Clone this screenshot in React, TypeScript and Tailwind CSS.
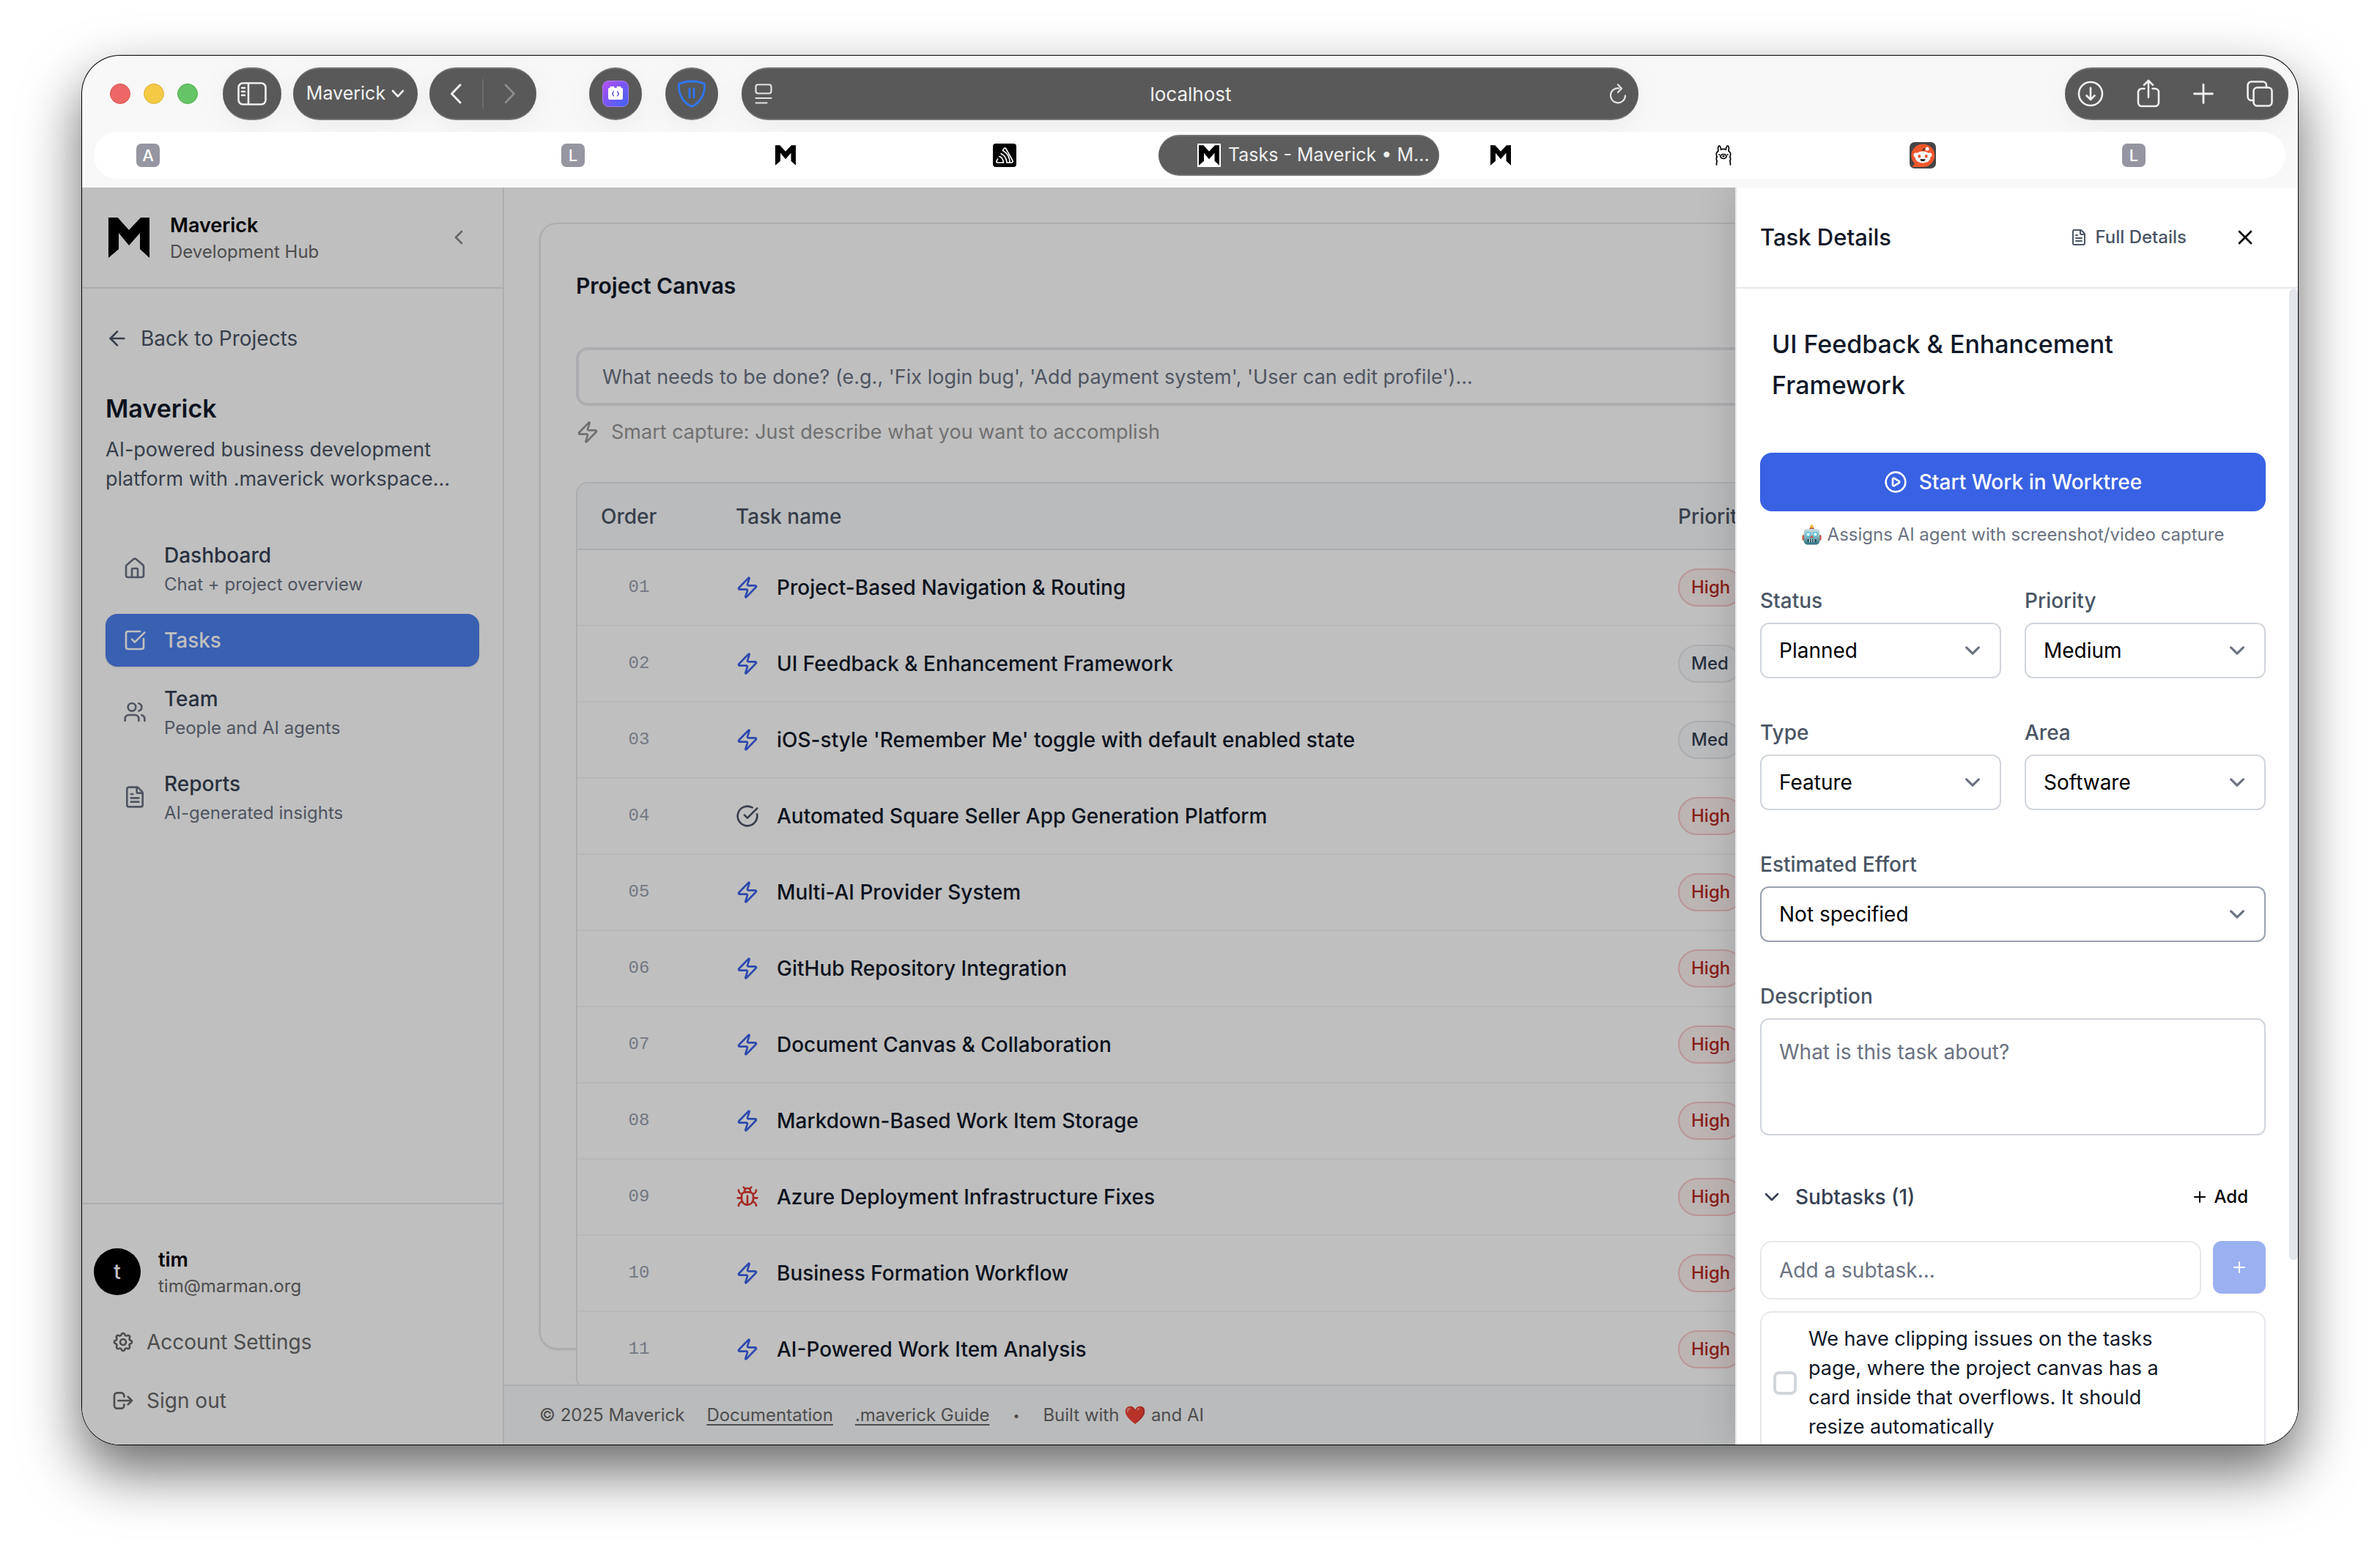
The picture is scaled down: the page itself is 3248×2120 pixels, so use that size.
import type { ComponentType, ReactNode } from "react";
import {
  ArrowLeft,
  Bug,
  ChevronDown,
  ChevronLeft,
  CirclePlay,
  CircleCheckBig,
  FileText,
  House,
  Plus,
  SquareCheckBig,
  Users,
  X,
  Zap,
} from "lucide-react";

type IconType = ComponentType<{ className?: string; strokeWidth?: number }>;

function MarkLogo({ className }: { className?: string }) {
  return (
    <svg viewBox="0 0 56 55" className={className} fill="#000" aria-hidden="true">
      <path d="M0 0H12.6L28 17L44 0H56V55L43 43V21L28 38L14 21V43L0 55Z" />
    </svg>
  );
}

/* ---------- Browser chrome ---------- */

const pill =
  "flex h-[72px] shrink-0 items-center rounded-full border-y-2 border-[#747474] bg-[#595959] text-[#f0f0f0] shadow-[0_8px_40px_rgba(0,0,0,0.05)]";

function SidebarGlyph() {
  return (
    <svg viewBox="0 0 40 32" className="h-8 w-10" fill="none" stroke="currentColor" strokeWidth="2.6" strokeLinecap="round">
      <rect x="1.5" y="1.5" width="37" height="29" rx="6" />
      <path d="M15 2v28M6 8h4M6 13h4M6 18h4" />
    </svg>
  );
}

function BlocksExtension() {
  return (
    <svg viewBox="0 0 36 36" className="size-9">
      <defs>
        <linearGradient id="ext" x1="0" y1="0" x2="1" y2="1">
          <stop offset="0.1" stopColor="#a94ff5" />
          <stop offset="1" stopColor="#3a63f6" />
        </linearGradient>
      </defs>
      <rect x="0.5" y="0.5" width="35" height="35" rx="8" fill="url(#ext)" stroke="#b07af2" />
      <path d="M8 11.5a1.500 1.500 0 0 1 1.500-1.500h1V9a1 1 0 0 1 1-1h4a1 1 0 0 1 1 1v1h3V9a1 1 0 0 1 1-1h4a1 1 0 0 1 1 1v1h1a1.500 1.500 0 0 1 1.500 1.500V24a2 2 0 0 1-2 2H10a2 2 0 0 1-2-2Z" fill="#fff" />
      <path d="M16 15c-1.500 0-1.500.8-1.500 1.700S14 18 13 18c1 0 1.500.4 1.500 1.300S14.500 21 16 21M20 15c1.500 0 1.500.8 1.500 1.700S22 18 23 18c-1 0-1.500.4-1.500 1.300S21.500 21 20 21" fill="none" stroke="#5b4be0" strokeWidth="1.3" />
    </svg>
  );
}

function ShieldExtension() {
  return (
    <svg viewBox="0 0 38 38" className="size-[38px]" fill="none" stroke="#2f76f5" strokeWidth="2.8" strokeLinecap="round" strokeLinejoin="round">
      <path d="M1.5 5.500C12 .8 26 .8 36.500 5.500 37.500 19 31 31 19 36.500 7 31 .5 19 1.500 5.500Z" />
      <path d="M16 12v12M22 12v12" />
    </svg>
  );
}

function ReaderGlyph() {
  return (
    <svg viewBox="0 0 24 28" className="h-7 w-6" fill="none" stroke="#e4e4e4" strokeWidth="2.2" strokeLinecap="round">
      <rect x="1.5" y="1.5" width="21" height="12" rx="3" />
      <path d="M1.5 20h21M1.500 26.500h15" />
    </svg>
  );
}

function ReloadGlyph() {
  return (
    <svg viewBox="0 0 24 28" className="h-7 w-6" fill="none" stroke="#e4e4e4" strokeWidth="2.2" strokeLinecap="round" strokeLinejoin="round">
      <path d="M13.5 6.500A10 10 0 1 0 22 16.500M12 1.500l5 5.300-5 5.200" />
    </svg>
  );
}

const glyph = { fill: "none", stroke: "currentColor", strokeWidth: 2.6, strokeLinecap: "round", strokeLinejoin: "round" } as const;

function Toolbar() {
  return (
    <div className="flex h-[104px] items-center pr-[13px] pl-[38px]">
      <div className="flex gap-[18px]">
        <button aria-label="Close window" className="size-7 rounded-full border border-[#d9534f] bg-[#ec6765]" />
        <button aria-label="Minimise window" className="size-7 rounded-full border border-[#deb23a] bg-[#f4c944]" />
        <button aria-label="Zoom window" className="size-7 rounded-full border border-[#4fb24c] bg-[#65c466]" />
      </div>
      <button aria-label="Show sidebar" className={`${pill} ml-[34px] w-20 justify-center`}>
        <SidebarGlyph />
      </button>
      <button className={`${pill} ml-4 w-[170px] justify-center gap-2 text-[25px]`}>
        Maverick
        <svg viewBox="0 0 18 12" className="h-3 w-[18px]" {...glyph}>
          <path d="M2 2l7 7.5L16 2" />
        </svg>
      </button>
      <div className={`${pill} ml-4 w-[146px]`}>
        <button aria-label="Back" className="flex flex-1 justify-center">
          <svg viewBox="0 0 16 28" className="h-7 w-4" {...glyph} strokeWidth={3}>
            <path d="M14 2L2.500 14L14 26" />
          </svg>
        </button>
        <span className="h-10 w-0.5 bg-[#6b6b6b]" />
        <button aria-label="Forward" className="flex flex-1 justify-center text-[#8c8c8c]">
          <svg viewBox="0 0 16 28" className="h-7 w-4" {...glyph}>
            <path d="M2 2L13.500 14L2 26" />
          </svg>
        </button>
      </div>
      <button aria-label="Blocks extension" className={`${pill} ml-[72px] w-[72px] justify-center`}>
        <BlocksExtension />
      </button>
      <button aria-label="Content blocker" className={`${pill} ml-8 w-[72px] justify-center`}>
        <ShieldExtension />
      </button>
      <div className={`${pill} ml-8 w-[1224px] justify-between pr-4 pl-[18px]`}>
        <button aria-label="Page menu">
          <ReaderGlyph />
        </button>
        <span className="text-[26px]">localhost</span>
        <button aria-label="Reload">
          <ReloadGlyph />
        </button>
      </div>
      <div className={`${pill} ml-auto w-[305px] justify-between pr-[21px] pl-[17px]`}>
        <button aria-label="Downloads">
          <svg viewBox="0 0 36 36" className="size-9" {...glyph}>
            <circle cx="18" cy="18" r="16" />
            <path d="M18 10v16M12.500 20.500L18 26l5.500-5.500" />
          </svg>
        </button>
        <button aria-label="Share">
          <svg viewBox="0 0 32 40" className="h-10 w-8" {...glyph}>
            <path d="M10.500 13H7a5 5 0 0 0-5 5v14a5 5 0 0 0 5 5h18a5 5 0 0 0 5-5V18a5 5 0 0 0-5-5h-3.500M16 25V2M10 8l6-6 6 6" />
          </svg>
        </button>
        <button aria-label="New tab">
          <svg viewBox="0 0 28 28" className="size-7" {...glyph} strokeWidth={2.8}>
            <path d="M14 1.500v25M1.500 14h25" />
          </svg>
        </button>
        <button aria-label="Tab overview">
          <svg viewBox="0 0 36 36" className="size-9" {...glyph}>
            <rect x="9.5" y="9.5" width="25" height="25" rx="5" />
            <path d="M9.500 27H6.500a5 5 0 0 1-5-5V6.500a5 5 0 0 1 5-5H22a5 5 0 0 1 5 5v3" />
          </svg>
        </button>
      </div>
    </div>
  );
}

function LetterBadge({ letter }: { letter: string }) {
  return (
    <span className="flex size-8 items-center justify-center rounded-[7px] bg-[#9696a2] text-[22px] leading-8 font-medium text-white">
      {letter}
    </span>
  );
}

function StackedArcs() {
  return (
    <svg viewBox="0 0 32 32" className="size-8">
      <rect width="32" height="32" rx="4" fill="#000" />
      <path
        d="M13.500 9.500L15 6.900a1.600 1.600 0 0 1 2.800 0L27 23.500A1.700 1.700 0 0 1 25.500 26H23.500M13.500 9.500C19 12.500 22.800 18.500 23.200 26H19M11.200 13.700C15.800 16 18.700 20.500 19 26M9 17.600C12.300 19.200 14.300 22.300 14.500 26H6.500A1.600 1.600 0 0 1 5.100 23.600L6.600 21.200"
        fill="none"
        stroke="#fff"
        strokeWidth="1.7"
        strokeLinejoin="round"
        strokeLinecap="round"
      />
    </svg>
  );
}

function Llama() {
  return (
    <svg viewBox="0 0 22 28" className="h-7 w-[22px]" fill="none" stroke="#000" strokeWidth="1.7" strokeLinecap="round" strokeLinejoin="round">
      <path d="M1.600 27c-.3-2 0-3.500.6-5-1.300-2.500-1.300-4 0-6C.6 12.500 1.300 9.500 4 8.300 3.300 4.500 3.600 1.200 5 1.200S7.300 3.500 7.600 6.400c2.200-1.400 4.600-1.400 6.800 0 .3-2.900 1.200-5.200 2.600-5.200s1.700 3.300 1 7.100c2.700 1.200 3.400 4.200 1.800 7.700 1.300 2 1.300 3.500 0 6 .6 1.500.9 3 .6 5" />
      <ellipse cx="11" cy="15.500" rx="4" ry="3" />
      <path d="M10.300 15.200h1.400M5.300 13.200h.1M16.600 13.200h.1" strokeWidth="2" />
    </svg>
  );
}

function Snoo() {
  return (
    <svg viewBox="0 0 36 36" className="size-9">
      <rect width="36" height="36" rx="7" fill="#454545" />
      <path d="M18 2.500a16 15.500 0 1 1 0 31.500H4.500c-.8 0-1-.8-.4-1.300L7 29.500A15.800 15.800 0 0 1 18 2.500Z" fill="#f0562b" />
      <path d="M18 12c.5-2.500 2-3.600 5-3" fill="none" stroke="#222" strokeWidth="1.3" />
      <circle cx="24" cy="9.200" r="2.500" fill="#fff" />
      <circle cx="8.500" cy="17.500" r="3" fill="#fff" />
      <circle cx="27.500" cy="17.500" r="3" fill="#fff" />
      <ellipse cx="18" cy="20.500" rx="10.500" ry="8" fill="#f3f8fa" />
      <ellipse cx="13.300" cy="19.300" rx="1.900" ry="2.400" fill="#f0562b" />
      <ellipse cx="22.700" cy="19.300" rx="1.900" ry="2.400" fill="#f0562b" />
      <path d="M14.500 23.300h7a3.500 2.800 0 0 1-7 0Z" fill="#111" />
    </svg>
  );
}

function TabBar() {
  return (
    <div className="mr-[17px] ml-4 grid h-16 grid-cols-[580fr_290fr_299fr_226fr_453fr_307fr_265fr_290fr_223fr] items-center rounded-full bg-white pl-[58px]">
      <LetterBadge letter="A" />
      <LetterBadge letter="L" />
      <MarkLogo className="ml-0.5 size-7" />
      <StackedArcs />
      <button className="mr-[70px] flex h-14 items-center gap-2.5 rounded-full border-y-2 border-[#747474] bg-[#5d5d5d] pl-[53px] text-[25px] whitespace-nowrap text-[#f0f0f0]">
        <span className="flex size-8 items-center justify-center bg-white">
          <MarkLogo className="size-7" />
        </span>
        Tasks - Maverick • M...
      </button>
      <MarkLogo className="size-7" />
      <Llama />
      <Snoo />
      <LetterBadge letter="L" />
    </div>
  );
}

/* ---------- Sidebar ---------- */

const navItems: { icon: IconType; title: string; note?: string; active?: boolean }[] = [
  { icon: House, title: "Dashboard", note: "Chat + project overview" },
  { icon: SquareCheckBig, title: "Tasks", active: true },
  { icon: Users, title: "Team", note: "People and AI agents" },
  { icon: FileText, title: "Reports", note: "AI-generated insights" },
];

function AccountLink({ path, children }: { path: string; children: ReactNode }) {
  return (
    <a href="#" className="flex h-20 items-center gap-4 px-6 text-[28px] text-[#676767]">
      <svg viewBox="0 0 24 24" className="size-8" fill="none" stroke="currentColor" strokeWidth="2" strokeLinecap="round" strokeLinejoin="round">
        <path d={path} />
      </svg>
      {children}
    </a>
  );
}

const gearPath =
  "M10.325 4.317c.426-1.756 2.924-1.756 3.350 0a1.724 1.724 0 0 0 2.573 1.066c1.543-.94 3.310.826 2.370 2.370a1.724 1.724 0 0 0 1.065 2.572c1.756.426 1.756 2.924 0 3.350a1.724 1.724 0 0 0-1.066 2.573c.94 1.543-.826 3.310-2.370 2.370a1.724 1.724 0 0 0-2.572 1.065c-.426 1.756-2.924 1.756-3.350 0a1.724 1.724 0 0 0-2.573-1.066c-1.543.94-3.310-.826-2.370-2.370a1.724 1.724 0 0 0-1.065-2.572c-1.756-.426-1.756-2.924 0-3.350a1.724 1.724 0 0 0 1.066-2.573c-.94-1.543.826-3.310 2.370-2.370.996.608 2.296.07 2.572-1.065zM15 12a3 3 0 1 1-6 0 3 3 0 0 1 6 0z";
const signOutPath =
  "M17 16l4-4m0 0l-4-4m4 4H7m6 4v1a3 3 0 0 1-3 3H6a3 3 0 0 1-3-3V7a3 3 0 0 1 3-3h4a3 3 0 0 1 3 3v1";

function Sidebar() {
  return (
    <aside className="flex w-[576px] shrink-0 flex-col border-r-2 border-gray-200 bg-white">
      <div className="flex h-[138px] items-center border-b-2 border-gray-200 px-8">
        <span className="flex size-16 items-center justify-center">
          <MarkLogo className="h-[55px] w-14" />
        </span>
        <div className="ml-6">
          <p className="text-[27px] leading-10 font-semibold text-black">Maverick</p>
          <p className="text-2xl leading-8 text-[#676767]">Development Hub</p>
        </div>
        <button aria-label="Collapse sidebar" className="mr-3 ml-auto text-[#8a8a8a]">
          <ChevronLeft className="size-8" />
        </button>
      </div>

      <div className="px-8 pt-8">
        <a href="#" className="flex h-[72px] items-center gap-4 text-[28px] text-gray-600">
          <ArrowLeft className="size-8" />
          Back to Projects
        </a>
        <h2 className="mt-8 text-[34px] leading-[56px] font-semibold text-gray-900">Maverick</h2>
        <p className="mt-2 text-[27px] leading-10 text-gray-600">
          AI-powered business development platform with .maverick workspace...
        </p>
        <nav className="mt-12 flex flex-col gap-2">
          {navItems.map(({ icon: Icon, title, note, active }) => (
            <a
              key={title}
              href="#"
              className={`flex items-center gap-6 rounded-2xl px-6 py-4 ${
                active ? "bg-[#4d80ed] text-white shadow-sm" : "text-gray-700"
              }`}
            >
              <Icon className={active ? "size-8" : "size-8 text-gray-500"} />
              <span className="flex flex-col gap-1">
                <span className="text-[28px] leading-10 font-medium">{title}</span>
                {note && <span className="text-2xl leading-8 text-gray-500">{note}</span>}
              </span>
            </a>
          ))}
        </nav>
      </div>

      <div className="mt-auto border-t-2 border-gray-200 px-4 pt-14 pb-5">
        <div className="mb-5 flex items-center gap-6">
          <span className="flex size-16 items-center justify-center rounded-full bg-black text-[28px] font-medium text-white">t</span>
          <div>
            <p className="text-[27px] leading-10 font-semibold text-black">tim</p>
            <p className="text-2xl leading-8 text-[#676767]">tim@marman.org</p>
          </div>
        </div>
        <AccountLink path={gearPath}>Account Settings</AccountLink>
        <AccountLink path={signOutPath}>Sign out</AccountLink>
      </div>
    </aside>
  );
}

/* ---------- Task canvas ---------- */

type Task = { name: string; kind: "feature" | "task" | "bug"; priority: "High" | "Med" };

const tasks: Task[] = [
  { name: "Project-Based Navigation & Routing", kind: "feature", priority: "High" },
  { name: "UI Feedback & Enhancement Framework", kind: "feature", priority: "Med" },
  { name: "iOS-style 'Remember Me' toggle with default enabled state", kind: "feature", priority: "Med" },
  { name: "Automated Square Seller App Generation Platform", kind: "task", priority: "High" },
  { name: "Multi-AI Provider System", kind: "feature", priority: "High" },
  { name: "GitHub Repository Integration", kind: "feature", priority: "High" },
  { name: "Document Canvas & Collaboration", kind: "feature", priority: "High" },
  { name: "Markdown-Based Work Item Storage", kind: "feature", priority: "High" },
  { name: "Azure Deployment Infrastructure Fixes", kind: "bug", priority: "High" },
  { name: "Business Formation Workflow", kind: "feature", priority: "High" },
  { name: "AI-Powered Work Item Analysis", kind: "feature", priority: "High" },
];

const kindIcon: Record<Task["kind"], { icon: IconType; tone: string }> = {
  feature: { icon: Zap, tone: "text-[#3d62e8]" },
  task: { icon: CircleCheckBig, tone: "text-gray-600" },
  bug: { icon: Bug, tone: "text-[#dc3a30]" },
};

function TaskTable() {
  return (
    <div className="mt-12 overflow-hidden rounded-2xl border-2 border-gray-200 bg-white">
      <table className="w-full table-fixed border-collapse text-left">
        <thead>
          <tr className="h-[90px] border-b-2 border-gray-200 bg-gray-50 text-[28px] text-gray-600">
            <th className="w-[184px] px-8 font-medium">Order</th>
            <th className="px-8 font-medium">Task name</th>
            <th className="w-[778px] px-8 font-medium">Priority</th>
          </tr>
        </thead>
        <tbody>
          {tasks.map(({ name, kind, priority }, i) => {
            const { icon: Icon, tone } = kindIcon[kind];
            return (
              <tr key={name} className="h-[104px] border-b-2 border-gray-100">
                <td className="pr-12 pl-8 text-center font-['Liberation_Mono',monospace] text-2xl text-gray-400">
                  {String(i + 1).padStart(2, "0")}
                </td>
                <td className="px-8">
                  <span className="flex items-center gap-6 text-[28px] font-medium whitespace-nowrap text-gray-900">
                    <Icon className={`size-8 ${tone}`} />
                    {name}
                  </span>
                </td>
                <td className="px-8">
                  <span
                    className={`inline-flex h-[52px] items-center rounded-full border-2 px-4 text-2xl font-medium ${
                      priority === "High"
                        ? "border-[#f8c9c9] bg-[#fdf0f0] text-[#b42a1f]"
                        : "border-gray-200 bg-gray-50 text-gray-700"
                    }`}
                  >
                    {priority}
                  </span>
                </td>
              </tr>
            );
          })}
        </tbody>
      </table>
    </div>
  );
}

function Canvas() {
  return (
    <div className="flex min-w-0 flex-1 flex-col bg-white">
      <main className="min-h-0 flex-1 overflow-hidden p-12">
        <section className="h-full rounded-3xl border-2 border-gray-200 bg-white p-12 shadow-sm">
          <h1 className="flex h-[72px] items-center text-[30px] font-semibold text-gray-900">Project Canvas</h1>
          <input
            aria-label="New task"
            placeholder="What needs to be done? (e.g., 'Fix login bug', 'Add payment system', 'User can edit profile')..."
            className="mt-12 h-20 w-full rounded-2xl border-4 border-gray-200 bg-white px-8 text-[27px] placeholder:text-gray-500"
          />
          <p className="mt-4 flex items-center gap-4 text-[27px] leading-10 text-[#969696]">
            <Zap className="size-8" />
            Smart capture: Just describe what you want to accomplish
          </p>
          <TaskTable />
        </section>
      </main>
      <footer className="relative flex h-[82px] shrink-0 items-center gap-[30px] border-t-2 border-gray-200 bg-gray-50 px-12 text-2xl text-[#676767]">
        <span>© 2025 Maverick</span>
        <a href="#" className="underline underline-offset-4">Documentation</a>
        <a href="#" className="underline underline-offset-4">.maverick Guide</a>
        <span className="px-0.5 text-base">•</span>
        <span>Built with ❤️ and AI</span>
      </footer>
    </div>
  );
}

/* ---------- Details panel ---------- */

function SelectField({ id, label, options, strong }: { id: string; label: string; options: string[]; strong?: boolean }) {
  return (
    <div className="flex flex-col gap-2.5">
      <label htmlFor={id} className="text-[28px] leading-10 font-medium text-gray-600">
        {label}
      </label>
      <div className="relative">
        <select
          id={id}
          className={`h-[76px] w-full appearance-none rounded-xl border-2 bg-white px-6 text-[28px] text-black ${
            strong ? "border-gray-400" : "border-gray-300"
          }`}
        >
          {options.map((o) => (
            <option key={o}>{o}</option>
          ))}
        </select>
        <svg
          viewBox="0 0 20 20"
          className="pointer-events-none absolute top-1/2 right-[18px] size-[42px] -translate-y-1/2"
          fill="none"
          stroke="#6b7280"
          strokeWidth="1.5"
          strokeLinecap="round"
          strokeLinejoin="round"
        >
          <path d="M6 8l4 4 4-4" />
        </svg>
      </div>
    </div>
  );
}

function RobotFace() {
  return (
    <svg viewBox="0 0 27 28" className="h-7 w-[27px] shrink-0" aria-hidden="true">
      <defs>
        <linearGradient id="robot" x1="0" y1="0" x2="0" y2="1">
          <stop offset="0" stopColor="#c9dde2" />
          <stop offset="0.45" stopColor="#8fb9c2" />
          <stop offset="1" stopColor="#2d6f80" />
        </linearGradient>
      </defs>
      <rect x="0.5" y="14" width="4" height="8" rx="2" fill="#c0563f" />
      <rect x="22.5" y="14" width="4" height="8" rx="2" fill="#c0563f" />
      <path d="M10 6.500h7l-1-2.500h-5Z" fill="#b04a3c" />
      <circle cx="13.5" cy="2.6" r="2.3" fill="#f2b63a" />
      <path d="M7 6h13a4 4 0 0 1 4 4l.5 12a5.500 5.500 0 0 1-5.500 5.500H8A5.500 5.500 0 0 1 2.500 22L3 10a4 4 0 0 1 4-4Z" fill="url(#robot)" />
      <circle cx="8.500" cy="13.500" r="3.500" fill="#4fc3d9" />
      <circle cx="18.500" cy="13.500" r="3.500" fill="#4fc3d9" />
      <circle cx="8.500" cy="13.500" r="2.100" fill="#fff" />
      <circle cx="18.500" cy="13.500" r="2.100" fill="#fff" />
      <path d="M13.500 14.500l2 3.500h-4Z" fill="#d2452f" />
      <rect x="7.500" y="20" width="12" height="4" rx="1" fill="#24505c" />
      <path d="M10.500 20v4M13.500 20v4M16.500 20v4" stroke="#d8e6e9" strokeWidth="1.2" />
    </svg>
  );
}

function DetailsPanel() {
  return (
    <aside className="absolute inset-y-0 right-0 z-20 flex w-[768px] flex-col overflow-hidden border-l-2 border-gray-200 bg-white shadow-[0_0_50px_rgba(0,0,0,0.16)]">
      <div className="flex h-[138px] shrink-0 items-center border-b-2 border-gray-200 px-8">
        <h2 className="text-[31px] font-medium text-gray-900">Task Details</h2>
        <button className="ml-auto flex h-16 items-center gap-2.5 px-6 text-2xl font-medium text-gray-600">
          <FileText className="size-6" />
          Full Details
        </button>
        <button aria-label="Close" className="ml-4 flex h-[72px] w-20 items-center justify-center text-black">
          <X className="size-8" />
        </button>
      </div>

      <div className="flex min-h-0 flex-1">
        <div className="min-w-0 flex-1 overflow-hidden p-8">
          <h3 className="py-4 pr-20 pl-4 text-[34px] leading-[56px] font-medium text-gray-900">UI Feedback & Enhancement Framework</h3>
          <button className="mt-12 flex h-20 w-full items-center justify-center gap-4 rounded-2xl bg-[#3862e3] text-[28px] font-medium text-white">
            <CirclePlay className="size-8" />
            Start Work in Worktree
          </button>
          <p className="mt-4 flex items-center justify-center gap-2 text-2xl leading-8 text-gray-500">
            <RobotFace />
            Assigns AI agent with screenshot/video capture
          </p>

          <div className="mt-[54px] flex flex-col gap-[54px]">
            <div className="grid grid-cols-2 gap-x-8 gap-y-[54px]">
              <SelectField id="status" label="Status" options={["Planned", "In Progress", "Done"]} />
              <SelectField id="priority" label="Priority" options={["Medium", "High", "Low"]} />
              <SelectField id="type" label="Type" options={["Feature", "Bug", "Task"]} />
              <SelectField id="area" label="Area" options={["Software", "Design", "Operations"]} />
            </div>
            <SelectField id="effort" label="Estimated Effort" options={["Not specified", "Small", "Medium", "Large"]} strong />
            <div className="flex flex-col gap-2.5">
              <label htmlFor="description" className="text-[28px] leading-10 font-medium text-gray-600">
                Description
              </label>
              <textarea
                id="description"
                placeholder="What is this task about?"
                className="h-40 w-full resize-none rounded-xl border-2 border-gray-300 px-6 py-6 text-[28px] leading-10 placeholder:text-gray-500"
              />
            </div>
          </div>

          <div className="mt-12 flex h-[72px] items-center justify-between">
            <button className="flex items-center gap-4 text-[28px] font-medium text-gray-700">
              <ChevronDown className="size-8" />
              Subtasks (1)
            </button>
            <button className="flex items-center gap-2 px-6 text-2xl font-medium text-black">
              <Plus className="size-6" />
              Add
            </button>
          </div>
          <div className="mt-6 flex items-start gap-4">
            <input
              aria-label="New subtask"
              placeholder="Add a subtask..."
              className="h-20 min-w-0 flex-1 rounded-2xl border-2 border-gray-200 px-6 text-[28px] placeholder:text-gray-500"
            />
            <button aria-label="Add subtask" className="flex size-[72px] items-center justify-center rounded-xl bg-[#9bb0f1] text-white">
              <Plus className="size-6" />
            </button>
          </div>
          <label className="mt-4 flex items-center gap-4 rounded-2xl border-2 border-gray-200 py-4 pr-[104px] pl-4">
            <input type="checkbox" className="size-8 shrink-0 appearance-none rounded-lg border-4 border-gray-300 bg-white" />
            <span className="text-[27px] leading-10 text-gray-900">
              We have clipping issues on the tasks page, where the project canvas has a card inside that overflows. It should resize
              automatically
            </span>
          </label>
        </div>
        <div className="w-3 shrink-0">
          <div className="h-[84%] rounded-full bg-[#e2e5ea]" />
        </div>
      </div>
    </aside>
  );
}

export default function App() {
  return (
    <div className="flex h-screen bg-white px-28 pt-[76px] pb-[148px] font-['Inter',sans-serif]">
      <div className="flex min-w-0 flex-1 flex-col overflow-hidden rounded-[52px] bg-[#f8f8f8] shadow-[0_0_0_1px_#000,0_36px_80px_rgba(0,0,0,0.6)]">
        <Toolbar />
        <TabBar />
        <div className="relative mt-3 flex min-h-0 flex-1 overflow-hidden">
          <Sidebar />
          <Canvas />
          <div className="absolute inset-0 z-10 bg-black/25" />
          <DetailsPanel />
        </div>
      </div>
    </div>
  );
}
